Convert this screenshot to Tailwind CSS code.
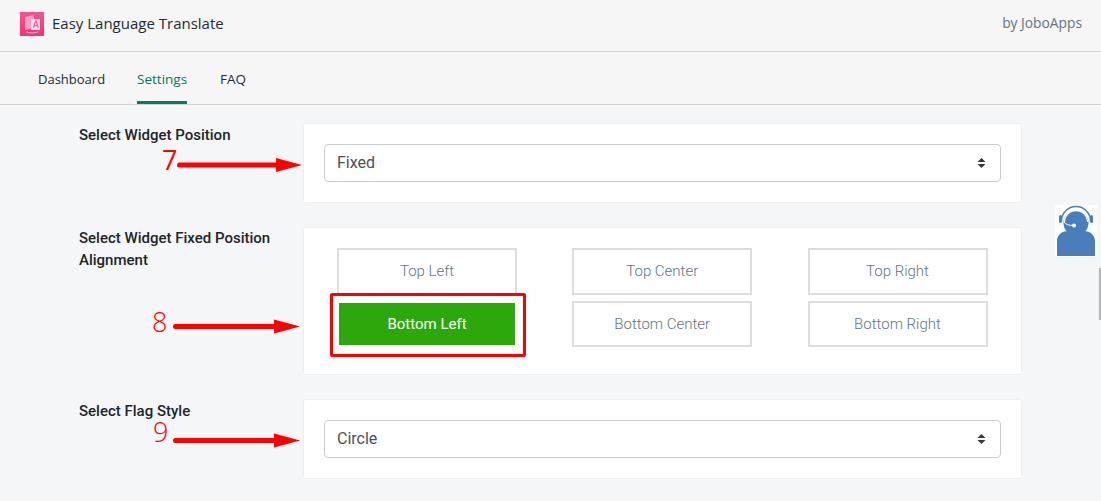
<!DOCTYPE html>
<html lang="en">

<head>
    <meta charset="utf-8">
    <title>Easy Language Translate</title>
    <script src="https://cdn.jsdelivr.net/npm/@tailwindcss/browser@4"></script>
</head>

<body class="relative h-[501px] w-[1101px] overflow-hidden bg-[#f4f6f8] font-['Roboto',sans-serif]">
    <!-- header -->
    <header class="flex h-[52px] items-center justify-between border-b border-[#d3d4d5] bg-[#f6f6f7] pb-[4px] pl-5 pr-[19px] font-['Open_Sans',sans-serif]">
        <div class="flex items-center gap-[8px]">
            <svg class="h-6 w-6" viewBox="0 0 24 24">
                <defs>
                    <linearGradient id="logo" x1="0" y1="0" x2="0" y2="1">
                        <stop offset="0" stop-color="#f0558f" />
                        <stop offset="1" stop-color="#ff2f78" />
                    </linearGradient>
                </defs>
                <rect width="24" height="24" fill="url(#logo)" />
                <path d="M5 5l9-2v13l-9 2z" fill="#ff9dc2" />
                <path d="M11 7h9v11h-9z" fill="#ffe3ee" />
                <path d="M13.500 16l2-7h.8l2 7M14.300 13.500h3.200" fill="none" stroke="#f0558f" stroke-width="1.100" />
                <path d="M6 20q6 2 12 0" fill="none" stroke="#ffb3cf" stroke-width="1" />
            </svg>
            <span class="text-[15px] text-[#212b36]">Easy Language Translate</span>
        </div>
        <span class="text-[13.800px] text-[#637381]">by JoboApps</span>
    </header>

    <!-- tabs -->
    <nav class="flex h-[53px] border-b border-[#d3d4d5] bg-[#f6f6f7] pl-[38px] font-['Open_Sans',sans-serif] text-[13px] text-[#212b36]">
        <a class="mr-[32px] flex items-center pt-[3px]">Dashboard</a>
        <a class="mr-[33px] flex w-[50px] items-center justify-center border-b-[3px] border-[#008060] pt-[6px] text-[13.500px] text-[#007a5a]">Settings</a>
        <a class="flex items-center pt-[3px] text-[13.500px]">FAQ</a>
    </nav>

    <!-- settings -->
    <main class="flex flex-col gap-6 pl-[79px] pt-[18px]">
        <section class="flex">
            <h2 class="w-[224px] pt-[1px] text-[15px] leading-[22px] font-medium text-[#212529]">Select Widget Position</h2>
            <div class="w-[719px] rounded-[3px] border border-[#eeeff1] bg-white p-5">
                <div class="flex h-[38px] items-center justify-between rounded-[4px] border border-[#c9cccf] pl-3 pr-[14px] text-[16px] text-[#495057]">
                    <span>Fixed</span>
                    <svg class="h-3 w-[9px]" viewBox="0 0 10 12" fill="#343a40"><path d="M5 .5L9.500 5H.5zM5 11.500L.5 7h9z" /></svg>
                </div>
            </div>
        </section>

        <section class="flex">
            <h2 class="w-[224px] text-[15px] leading-[22px] font-medium text-[#212529]">Select Widget Fixed Position<br>Alignment</h2>
            <div class="h-[148px] w-[719px] rounded-[3px] border border-[#eeeff1] bg-white pl-[33px] pt-5 text-[15px] text-[#637381]">
                <div class="grid grid-cols-[180px_180px_180px] gap-x-[55.250px] gap-y-[6px]">
                    <button class="h-[47px] border-2 border-[#dddddd] font-light">Top Left</button>
                    <button class="h-[47px] border-2 border-[#dddddd] font-light">Top Center</button>
                    <button class="h-[47px] border-2 border-[#dddddd] font-light">Top Right</button>
                    <button class="h-[46px] border-2 border-white bg-[#2ca70c] bg-clip-padding font-normal text-white">Bottom Left</button>
                    <button class="h-[46px] border-2 border-[#dddddd] font-light">Bottom Center</button>
                    <button class="h-[46px] border-2 border-[#dddddd] font-light">Bottom Right</button>
                </div>
            </div>
        </section>

        <section class="flex">
            <h2 class="w-[224px] pt-[1px] text-[15px] leading-[22px] font-medium text-[#212529]">Select Flag Style</h2>
            <div class="w-[719px] rounded-[3px] border border-[#eeeff1] bg-white p-5">
                <div class="flex h-[38px] items-center justify-between rounded-[4px] border border-[#c9cccf] pl-3 pr-[14px] text-[16px] text-[#495057]">
                    <span>Circle</span>
                    <svg class="h-3 w-[9px]" viewBox="0 0 10 12" fill="#343a40"><path d="M5 .5L9.500 5H.5zM5 11.500L.5 7h9z" /></svg>
                </div>
            </div>
        </section>
    </main>

    <!-- annotations drawn over the page -->
    <span class="absolute left-[162px] top-[146px] font-['Open_Sans',sans-serif] text-[27px] leading-7 text-[#f00]">7</span>
    <span class="absolute left-[152px] top-[308px] font-['Open_Sans',sans-serif] text-[27px] leading-7 font-light text-[#f00]">8</span>
    <span class="absolute left-[153px] top-[418px] font-['Open_Sans',sans-serif] text-[27px] leading-7 font-light text-[#f00]">9</span>
    <svg class="absolute left-[170px] top-[150px]" width="135" height="30" viewBox="0 0 135 30" fill="#f00"><path d="M9.500 12.500H106V8l26 7-26 7v-4.500H9.500a2.500 2.500 0 010-5z" /></svg>
    <svg class="absolute left-[165px] top-[312px]" width="140" height="30" viewBox="0 0 140 30" fill="#f00"><path d="M10.500 12H109V7.500l26 7-26 7V17H10.500a2.500 2.500 0 010-5z" /></svg>
    <svg class="absolute left-[165px] top-[426px]" width="140" height="30" viewBox="0 0 140 30" fill="#f00"><path d="M10.500 12H109V7.500l26 7-26 7V17H10.500a2.500 2.500 0 010-5z" /></svg>
    <div class="absolute left-[330px] top-[293px] h-[64px] w-[196px] rounded-[2px] border-[3px] border-[#f00]"></div>

    <!-- chat widget -->
    <div class="absolute left-[1055px] top-[205px] h-[52px] w-[42px] bg-white">
        <svg class="h-full w-full" viewBox="0 0 42 52">
            <circle cx="21" cy="18" r="12.500" fill="#4a7ebb" />
            <path d="M6.500 16a14.500 14.500 0 0129 0" fill="none" stroke="#4a7ebb" stroke-width="1.500" />
            <path d="M9.500 17a11.500 11.500 0 0123 0" fill="none" stroke="#fff" stroke-width="1.300" />
            <rect x="4" y="10" width="3" height="8" rx="1.500" fill="#4a7ebb" />
            <rect x="35" y="10" width="3" height="8" rx="1.500" fill="#4a7ebb" />
            <path d="M9 17q2 3.500 10 3.500" fill="none" stroke="#fff" stroke-width="1" />
            <circle cx="19" cy="20.500" r="2" fill="#fff" />
            <path d="M2 51V36c0-6 5-10 11-10q8 3 16 0c6 0 11 4 11 10v15z" fill="#4a7ebb" />
        </svg>
    </div>
    <div class="absolute left-[1099px] top-[268px] h-[52px] w-[2px] bg-[#b4b5b6]"></div>
</body>

</html>
